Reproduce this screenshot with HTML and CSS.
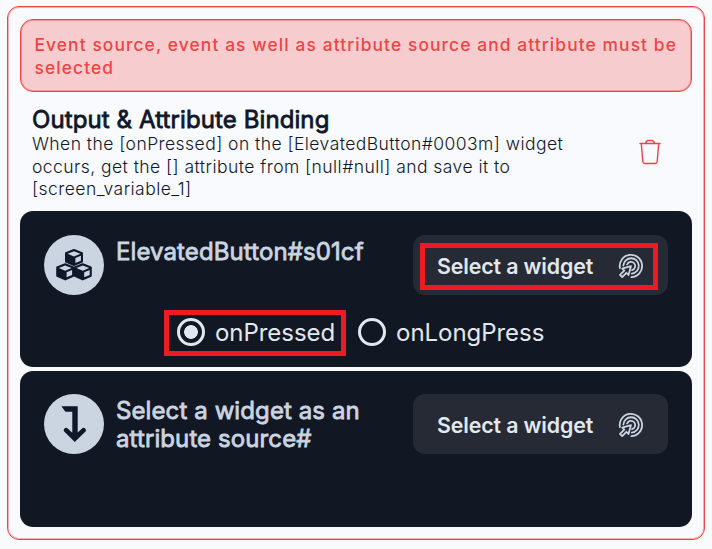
FILE: index.html
```
<!DOCTYPE html>
<html lang="en">
<head>
<meta charset="utf-8">
<title>Output &amp; Attribute Binding</title>
<link rel="stylesheet" href="styles.css">
</head>
<body>
<svg width="0" height="0" class="defs" aria-hidden="true">
  <symbol id="pick" viewBox="0 0 26 26">
    <g fill="none" stroke="currentColor" stroke-width="1.8" stroke-linecap="round" stroke-linejoin="round">
      <path d="M1.9 15A11.2 11.2 0 1 1 13.4 24.2"/>
      <path d="M5.4 12.5A7.7 7.7 0 1 1 13.8 20.6"/>
      <path d="M9.1 11.5A4.2 4.2 0 1 1 14 17.1"/>
      <path d="M13 13.1L4.2 15.6L6.3 17.7L2 21.9L4.2 24.1L8.4 19.8L10.5 22Z"/>
    </g>
  </symbol>
</svg>
<main class="card">
  <div class="alert">Event source, event as well as attribute source and attribute must be<br>selected</div>
  <header class="intro">
    <div class="copy">
      <h1>Output &amp; Attribute Binding</h1>
      <p>When the [onPressed] on the [ElevatedButton#0003m] widget<br>occurs, get the [] attribute from [null#null] and save it to<br>[screen_variable_1]</p>
    </div>
    <svg class="trash" viewBox="0 0 22 26" fill="none" stroke="#ef4444" stroke-width="1.4" stroke-linejoin="round" stroke-linecap="round">
      <path d="M1 4.5H21M2.3 4.5L3.8 22.5Q4 24.5 5.6 24.5H16.4Q18 24.5 18.2 22.5L19.7 4.5M6.5 4.3Q7.5 1.5 9.3 1.5H12.7Q14.5 1.5 15.5 4.3"/>
    </svg>
  </header>
  <section class="panel">
    <div class="row">
      <div class="badge">
        <svg width="36" height="32" viewBox="0 0 36 32">
          <g stroke="#0f172a" stroke-width="2" stroke-linejoin="round">
            <g id="cube"><path fill="#0f172a" d="M18 1L26 4.2V12.6L18 16.2L10 12.6V4.2Z"/><path fill="#cbd5e1" stroke="none" d="M18 2.2L24.4 4.8L18 7.5L11.6 4.8ZM19.4 9L24.9 6.7V11.8L19.4 14.1Z"/></g>
            <use href="#cube" x="-8.8" y="14.2"/><use href="#cube" x="8.8" y="14.2"/>
          </g>
        </svg>
      </div>
      <h2>ElevatedButton#s01cf</h2>
      <button class="select marked">Select a widget<svg><use href="#pick"/></svg></button>
    </div>
    <div class="radios">
      <label class="radio on marked"><i></i>onPressed</label>
      <label class="radio"><i></i>onLongPress</label>
    </div>
  </section>
  <section class="panel">
    <div class="row">
      <div class="badge">
        <svg width="36" height="40" viewBox="0 0 36 40">
          <path fill="#0f172a" d="M5.4 2.3H21.7V28.5L26.3 24.2Q28 23.2 29.4 24.7Q30.8 26.2 29.5 27.6L18.8 38L8.2 27.6Q6.9 26.2 8.3 24.7Q9.7 23.2 11.4 24.2L16.3 28.7V7.7H9.4Z"/>
        </svg>
      </div>
      <h2>Select a widget as an<br>attribute source#</h2>
      <button class="select">Select a widget<svg><use href="#pick"/></svg></button>
    </div>
  </section>
</main>
</body>
</html>
```
FILE: styles.css
```
* { box-sizing: border-box; }
body {
  margin: 0;
  padding: 6px 7px 9px;
  height: 549px;
  overflow: hidden;
  background: #f8fafb;
  font-family: Inter, sans-serif;
}
.defs { position: absolute; }
.card {
  height: 534px;
  padding: 12px;
  background: #f9fafd;
  border: 1px solid #ef4444;
  border-radius: 12px;
  box-shadow: inset 0 0 0 1px rgba(239, 68, 68, .4);
}
.alert {
  height: 73px;
  padding: 12.5px 13.5px 0;
  border: 1px solid #ef4444;
  border-radius: 13px;
  background: #f7cccf;
  box-shadow: inset 0 0 0 1px rgba(239, 68, 68, .4);
  color: #ef4444;
  font-size: 17.33px;
  font-weight: 500;
  line-height: 23px;
  letter-spacing: 1.12px;
  white-space: nowrap;
}
.intro {
  display: flex;
  justify-content: space-between;
  align-items: center;
  height: 119px;
  padding: 0 31px 0 12px;
  color: #0f172a;
}
.copy { padding-top: 4px; }
h1, h2, p { margin: 0; white-space: nowrap; }
h1, h2 {
  font-size: 24px;
  font-weight: 400;
  line-height: 28px;
  letter-spacing: .1px;
  -webkit-text-stroke: .8px currentColor;
}
h1 { line-height: 27px; }
p {
  font-size: 17.5px;
  font-weight: 330;
  line-height: 22.6px;
  letter-spacing: .45px;
}
.trash { width: 22px; height: 26px; }
.panel {
  height: 156px;
  padding: 24px;
  border-radius: 13px;
  background: #121823;
}
.panel + .panel {
  margin-top: 4px;
  padding-top: 23px;
}
.row { display: flex; height: 60px; }
.badge {
  display: flex;
  align-items: center;
  justify-content: center;
  width: 60px;
  height: 60px;
  border-radius: 50%;
  background: #cbd5e1;
}
h2 { margin: 3px 0 0 12px; color: #cbd5e1; }
.select {
  position: relative;
  display: flex;
  align-items: center;
  justify-content: space-between;
  width: 255px;
  height: 60px;
  margin-left: auto;
  padding: 2px 24px 0;
  border: 0;
  border-radius: 12px;
  background: #262a35;
  color: #e2e8f0;
  font: 600 21.33px Inter, sans-serif;
  letter-spacing: -.12px;
}
.select svg { width: 26px; height: 26px; color: #cbd5e1; }
.marked::after {
  content: "";
  position: absolute;
  border: 5px solid #ed1c24;
}
.select.marked::after { inset: 8px 10px 5px 7px; }
.radios {
  display: flex;
  gap: 23px;
  padding: 20px 0 0 133px;
}
.radio {
  position: relative;
  display: flex;
  align-items: center;
  gap: 10px;
  height: 34px;
  color: #e2e8f0;
  font-size: 24px;
  letter-spacing: -.05px;
}
.radio i {
  width: 28px;
  height: 28px;
  margin-top: -1px;
  border: 3px solid #e2e8f0;
  border-radius: 50%;
}
.radio.on i { background: radial-gradient(circle, #e2e8f0 6.5px, transparent 7.2px); }
.radio.marked::after { inset: -5px -11px -7px -13px; }
```
